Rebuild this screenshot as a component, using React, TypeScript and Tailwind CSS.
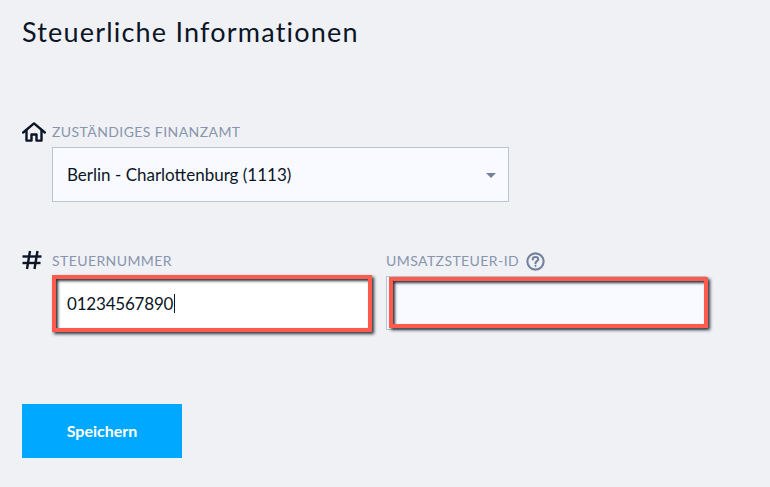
import { useState } from "react";

const HomeIcon = () => (
  <svg width="24" height="20" viewBox="0 0 24 20" fill="none" stroke="#0b1526" strokeWidth="2.4" strokeLinejoin="round" strokeLinecap="round">
    <path d="M1.2 10.5 L12 1.4 L22.8 10.5" />
    <path d="M4.5 8.5 V18.6 H9.5 V12.5 H14.5 V18.6 H19.5 V8.5" />
  </svg>
);

const HashIcon = () => (
  <svg width="20" height="20" viewBox="0 0 20 20" fill="none" stroke="#0b1526" strokeWidth="2.4">
    <path d="M0.5 6.5 H19.5" />
    <path d="M0.5 13 H18.5" />
    <path d="M8 1 L5 19" />
    <path d="M15.5 1 L12.5 19" />
  </svg>
);

const HelpIcon = () => (
  <svg width="19" height="19" viewBox="0 0 18 18" fill="none" stroke="#72829c" strokeWidth="2">
    <circle cx="9" cy="9" r="7.7" />
    <path d="M6.4 7 C6.4 5.5 7.6 4.7 9 4.7 C10.5 4.7 11.6 5.6 11.6 6.9 C11.6 8.6 9 8.7 9 10.6" strokeLinecap="round" />
    <circle cx="9" cy="13.1" r="0.5" fill="#72829c" strokeWidth="1" />
  </svg>
);

const RedBox = ({ className }: { className: string }) => (
  <div className={"absolute border-[4px] border-[#ff5a4e] shadow-[2px_2px_3px_#2b343d,inset_2px_2px_3px_#2b343d] " + className} />
);

export default function App() {
  const [steuernummer] = useState("01234567890");

  return (
    <div className="h-[487px] w-[770px] overflow-hidden bg-[#f0f1f5] pl-[22px] font-['Lato',sans-serif] text-[#0b1526]">
      <h1 className="pt-[15px] text-[27px] leading-[34px] tracking-[1.2px]">Steuerliche Informationen</h1>

      {/* Finanzamt */}
      <div className="mt-[73px] flex">
        <div className="w-[30px]">
          <HomeIcon />
        </div>
        <div>
          <label className="block text-[14px] leading-[20px] tracking-[0.42px] text-[#8795ad]">ZUSTÄNDIGES FINANZAMT</label>
          <div className="mt-[5px] flex h-[55px] w-[457px] items-center justify-between border border-[#bcc4d4] bg-[#f9faff] pl-[14px] pr-[12px]">
            <span className="text-[17px]">Berlin - Charlottenburg (1113)</span>
            <span className="mt-[2px] h-0 w-0 border-x-[5px] border-t-[5px] border-x-transparent border-t-[#72829c]" />
          </div>
        </div>
      </div>

      {/* Steuernummer und USt-ID */}
      <div className="mt-[48px] flex">
        <div className="w-[30px]">
          <HashIcon />
        </div>
        <div className="w-[334px]">
          <label className="block pt-px text-[14px] leading-[20px] tracking-[0.42px] text-[#8795ad]">STEUERNUMMER</label>
          <div className="relative mt-[4px] h-[57px] w-[320px]">
            <div className="flex h-full items-center bg-white pl-[15px] text-[17px] tracking-[-0.2px]">
              {steuernummer}
              <span className="ml-[0.5px] h-[19px] w-px bg-[#0b1526]" />
            </div>
            <RedBox className="inset-0" />
          </div>
        </div>
        <div>
          <label className="flex h-[21px] items-center gap-[7px] pt-px text-[14px] leading-[20px] tracking-[0.42px] text-[#8795ad]">
            UMSATZSTEUER-ID
            <HelpIcon />
          </label>
          <div className="relative mt-[5px] h-[54px] w-[320px] border border-[#bcc4d4] bg-[#f9faff]">
            <RedBox className="left-[2px] top-0 h-[51px] w-[319px]" />
          </div>
        </div>
      </div>

      <button className="mt-[72px] h-[54px] w-[160px] bg-[#00a8ff] text-[16px] font-bold text-white">Speichern</button>
    </div>
  );
}
